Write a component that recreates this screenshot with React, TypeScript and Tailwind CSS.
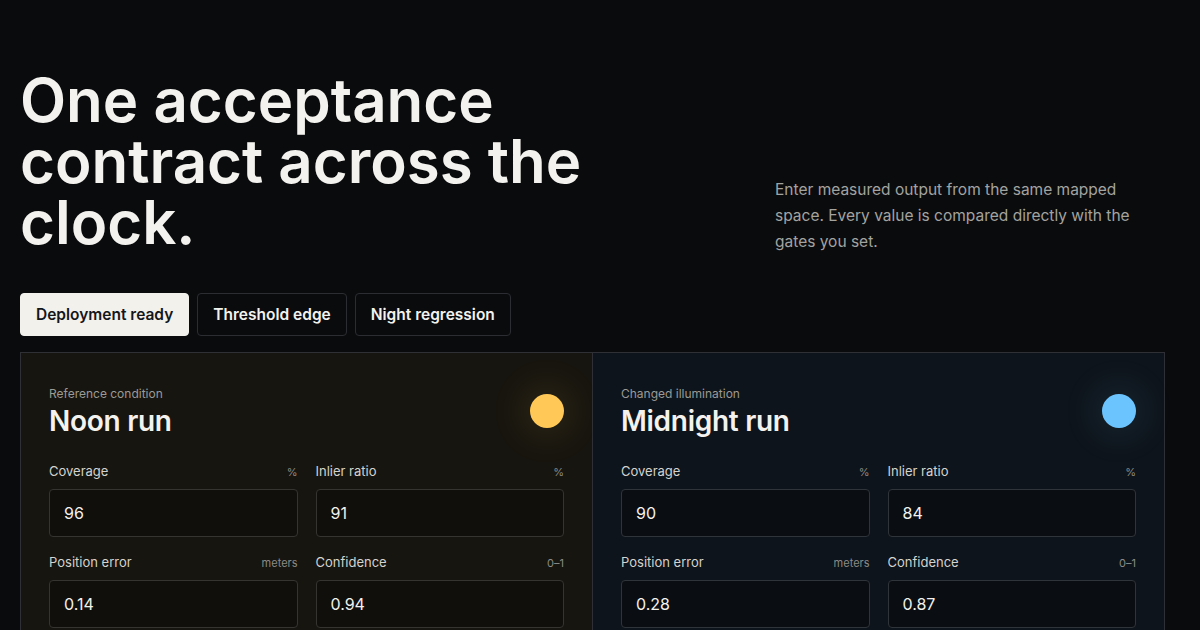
import { useState } from 'react';

type Field = { label: string; unit: string; value: string };

const presets = ['Deployment ready', 'Threshold edge', 'Night regression'];

const noonFields: Field[] = [
  { label: 'Coverage', unit: '%', value: '96' },
  { label: 'Inlier ratio', unit: '%', value: '91' },
  { label: 'Position error', unit: 'meters', value: '0.14' },
  { label: 'Confidence', unit: '0–1', value: '0.94' },
  { label: 'Drift', unit: 'meters', value: '0.05' },
  { label: 'Latency', unit: 'ms', value: '42' },
];

const midnightFields: Field[] = [
  { label: 'Coverage', unit: '%', value: '90' },
  { label: 'Inlier ratio', unit: '%', value: '84' },
  { label: 'Position error', unit: 'meters', value: '0.28' },
  { label: 'Confidence', unit: '0–1', value: '0.87' },
  { label: 'Drift', unit: 'meters', value: '0.09' },
  { label: 'Latency', unit: 'ms', value: '47' },
];

function RunPanel({
  eyebrow,
  title,
  fields,
  night,
}: {
  eyebrow: string;
  title: string;
  fields: Field[];
  night?: boolean;
}) {
  return (
    <div className={`px-7 pt-[33px] pb-10 ${night ? 'bg-[#0e141b]' : 'bg-[#17150f]'}`}>
      <div className="flex items-start justify-between">
        <div>
          <div className="text-[12px] leading-4 text-[#9a9a96]">{eyebrow}</div>
          <h2 className="mt-[3px] text-[28px] leading-8 font-semibold tracking-[-0.01em] text-[#f3f2ee]">
            {title}
          </h2>
        </div>
        <div
          className={`mt-[8px] h-[34px] w-[34px] rounded-full ${
            night
              ? 'bg-[#6cc4ff] shadow-[0_0_34px_10px_rgba(108,196,255,0.09)]'
              : 'bg-[#ffc857] shadow-[0_0_34px_10px_rgba(255,200,87,0.09)]'
          }`}
        />
      </div>
      <div className="mt-[24px] grid grid-cols-2 gap-x-[18px] gap-y-[15px]">
        {fields.map((f) => (
          <label key={f.label} className="block">
            <div className="flex items-baseline justify-between">
              <span className="text-[13px] leading-5 text-[#d4d3ce]">{f.label}</span>
              <span className="text-[11px] leading-5 text-[#8a8a86]">{f.unit}</span>
            </div>
            <input
              defaultValue={f.value}
              className={`mt-[7px] block h-[48px] w-full rounded-[4px] border px-[14px] text-[16px] text-[#f3f2ee] outline-none ${
                night ? 'border-[#2f343b] bg-[#0a0d11]' : 'border-[#363430] bg-[#100f0c]'
              }`}
            />
          </label>
        ))}
      </div>
    </div>
  );
}

export default function App() {
  const [active, setActive] = useState(0);

  return (
    <div
      className="min-h-[2400px] bg-[#0a0b0d] text-[#f3f2ee]"
      style={{ fontFamily: 'Inter, "Noto Sans", sans-serif' }}
    >
      <section className="pl-5 pr-[35px] pt-[70px]">
        <div className="grid grid-cols-[1fr_390px] items-end">
          <h1 className="text-[60px] leading-[61px] font-semibold text-[#f3f2ee]">
            One acceptance
            <br />
            contract across the
            <br />
            clock.
          </h1>
          <p className="mb-[-2px] max-w-[365px] text-[15.5px] leading-[26px] text-[#a3a3a0]">
            Enter measured output from the same mapped space. Every value is compared directly
            with the gates you set.
          </p>
        </div>

        <div className="mt-[40px] flex gap-2">
          {presets.map((p, i) => (
            <button
              key={p}
              onClick={() => setActive(i)}
              className={`h-[43px] rounded-[4px] border px-[15px] text-[15.5px] font-semibold ${
                i === active
                  ? 'border-[#f2f1ec] bg-[#f2f1ec] text-[#15161a]'
                  : 'border-[#2b2d32] bg-transparent text-[#f3f2ee]'
              }`}
            >
              {p}
            </button>
          ))}
        </div>

        <div className="mt-4 grid grid-cols-2 gap-px border border-[#2e3035] bg-[#2e3035]">
          <RunPanel eyebrow="Reference condition" title="Noon run" fields={noonFields} />
          <RunPanel eyebrow="Changed illumination" title="Midnight run" fields={midnightFields} night />
        </div>
      </section>
    </div>
  );
}
